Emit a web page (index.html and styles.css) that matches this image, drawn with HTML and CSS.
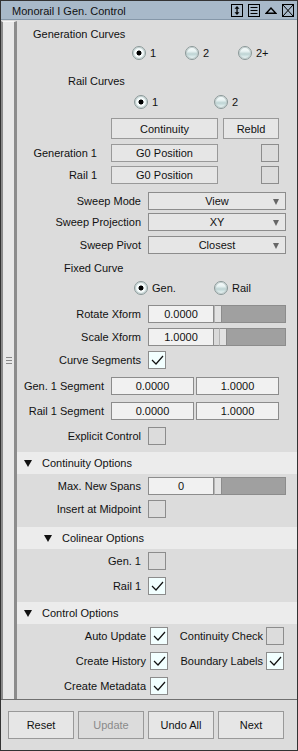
FILE: index.html
```html
<!DOCTYPE html>
<html lang="en">
<head>
    <meta charset="UTF-8" />
    <title>Monorail I Gen. Control</title>
    <link rel="stylesheet" href="styles.css">
</head>
<body>

<div class="win">
    <div class="titlebar">
        <span class="title">Monorail I Gen. Control</span>
        <div class="tools">
            <svg width="12" height="13" viewBox="0 0 12 13"><rect x="0.5" y="0.5" width="11" height="12" fill="none" stroke="#000"/><path d="M6 2 L8.5 4.8 H3.5Z M6 11 L8.5 8.2 H3.5Z" fill="#000"/><rect x="5.4" y="4" width="1.3" height="5" fill="#000"/></svg>
            <svg width="12" height="13" viewBox="0 0 12 13"><rect x="0.5" y="0.5" width="11" height="12" fill="none" stroke="#000"/><path d="M2.5 3.5 H9.5 M2.5 6.5 H9.5 M2.5 9.5 H9.5" stroke="#000"/></svg>
            <svg width="12" height="13" viewBox="0 0 12 13"><path d="M1.2 9.3 L6 4 L10.8 9.3 Z" fill="none" stroke="#000" stroke-width="1.4"/></svg>
            <svg width="12" height="13" viewBox="0 0 12 13"><rect x="0.5" y="0.5" width="11" height="12" fill="none" stroke="#000"/><path d="M1 1 L11 12 M11 1 L1 12" stroke="#000"/></svg>
        </div>
    </div>

    <div class="main">
        <div class="grip">
            <svg width="6" height="7" viewBox="0 0 6 7"><path d="M0 0.5 H6 M0 3.5 H6 M0 6.5 H6" stroke="#888"/></svg>
        </div>

        <div class="content">
            <p class="cap mt7 cap-gen">Generation Curves</p>
            <div class="radios mt5 radios-3">
                <label class="radio on"><i></i>1</label>
                <label class="radio"><i></i>2</label>
                <label class="radio"><i></i>2+</label>
            </div>

            <p class="cap mt14 cap-rail">Rail Curves</p>
            <div class="radios mt7 radios-2">
                <label class="radio on"><i></i>1</label>
                <label class="radio"><i></i>2</label>
            </div>

            <div class="row row-btns mt9">
                <button class="btn btn-wide">Continuity</button>
                <button class="btn btn-small">Rebld</button>
            </div>
            <div class="row mt5">
                <span class="lbl lbl-short">Generation 1</span>
                <button class="btn btn-wide">G0 Position</button>
                <span class="cb cb-far"></span>
            </div>
            <div class="row mt4">
                <span class="lbl lbl-short">Rail 1</span>
                <button class="btn btn-wide">G0 Position</button>
                <span class="cb cb-far"></span>
            </div>

            <div class="row mt8">
                <span class="lbl">Sweep Mode</span>
                <div class="drop">View</div>
            </div>
            <div class="row mt3">
                <span class="lbl">Sweep Projection</span>
                <div class="drop">XY</div>
            </div>
            <div class="row mt5">
                <span class="lbl">Sweep Pivot</span>
                <div class="drop">Closest</div>
            </div>

            <p class="cap mt7 cap-fixed">Fixed Curve</p>
            <div class="radios mt6 radios-2">
                <label class="radio on"><i></i>Gen.</label>
                <label class="radio"><i></i>Rail</label>
            </div>

            <div class="row mt10">
                <span class="lbl">Rotate Xform</span>
                <div class="slider">
                    <span class="fld">0.0000</span>
                    <span class="thumb"></span>
                    <span class="track"></span>
                </div>
            </div>
            <div class="row mt5">
                <span class="lbl">Scale Xform</span>
                <div class="slider">
                    <span class="fld">1.0000</span>
                    <span class="gap"></span>
                    <span class="thumb"></span>
                    <span class="track"></span>
                </div>
            </div>
            <div class="row mt5">
                <span class="lbl">Curve Segments</span>
                <span class="cb on"><svg width="16" height="16" viewBox="0 0 16 16"><path d="M3 8 L7 12 L14 4" fill="none" stroke="#111" stroke-width="1.2"/></svg></span>
            </div>
            <div class="row mt8">
                <span class="lbl lbl-seg">Gen. 1 Segment</span>
                <span class="fld fld-seg">0.0000</span>
                <span class="fld fld-seg">1.0000</span>
            </div>
            <div class="row mt7">
                <span class="lbl lbl-seg">Rail 1 Segment</span>
                <span class="fld fld-seg">0.0000</span>
                <span class="fld fld-seg">1.0000</span>
            </div>
            <div class="row mt7">
                <span class="lbl">Explicit Control</span>
                <span class="cb"></span>
            </div>

            <div class="section mt7">
                <svg class="arrow" width="8" height="7" viewBox="0 0 8 7"><path d="M0 0 H8 L4 7Z" fill="#111"/></svg>
                Continuity Options
            </div>
            <div class="row mt3">
                <span class="lbl">Max. New Spans</span>
                <div class="slider">
                    <span class="fld">0</span>
                    <span class="thumb"></span>
                    <span class="track"></span>
                </div>
            </div>
            <div class="row mt5">
                <span class="lbl">Insert at Midpoint</span>
                <span class="cb"></span>
            </div>

            <div class="section section-sub mt9">
                <svg class="arrow" width="8" height="7" viewBox="0 0 8 7"><path d="M0 0 H8 L4 7Z" fill="#111"/></svg>
                Colinear Options
            </div>
            <div class="row mt3">
                <span class="lbl">Gen. 1</span>
                <span class="cb"></span>
            </div>
            <div class="row mt7">
                <span class="lbl">Rail 1</span>
                <span class="cb on"><svg width="16" height="16" viewBox="0 0 16 16"><path d="M3 8 L7 12 L14 4" fill="none" stroke="#111" stroke-width="1.2"/></svg></span>
            </div>

            <div class="section mt7">
                <svg class="arrow" width="8" height="7" viewBox="0 0 8 7"><path d="M0 0 H8 L4 7Z" fill="#111"/></svg>
                Control Options
            </div>
            <div class="row mt3">
                <span class="lbl lbl-ctl">Auto Update</span>
                <span class="cb on"><svg width="16" height="16" viewBox="0 0 16 16"><path d="M3 8 L7 12 L14 4" fill="none" stroke="#111" stroke-width="1.2"/></svg></span>
                <span class="lbl lbl-ctl2">Continuity Check</span>
                <span class="cb"></span>
            </div>
            <div class="row mt7">
                <span class="lbl lbl-ctl">Create History</span>
                <span class="cb on"><svg width="16" height="16" viewBox="0 0 16 16"><path d="M3 8 L7 12 L14 4" fill="none" stroke="#111" stroke-width="1.2"/></svg></span>
                <span class="lbl lbl-ctl2">Boundary Labels</span>
                <span class="cb on"><svg width="16" height="16" viewBox="0 0 16 16"><path d="M3 8 L7 12 L14 4" fill="none" stroke="#111" stroke-width="1.2"/></svg></span>
            </div>
            <div class="row mt7">
                <span class="lbl lbl-ctl">Create Metadata</span>
                <span class="cb on"><svg width="16" height="16" viewBox="0 0 16 16"><path d="M3 8 L7 12 L14 4" fill="none" stroke="#111" stroke-width="1.2"/></svg></span>
            </div>
        </div>
    </div>

    <div class="footer">
        <button class="btn btn-foot">Reset</button>
        <button class="btn btn-foot" disabled>Update</button>
        <button class="btn btn-foot">Undo All</button>
        <button class="btn btn-foot">Next</button>
    </div>
</div>

</body>
</html>
```

FILE: styles.css
```css
* {
    box-sizing: border-box;
}
body {
    margin: 0;
    font-family: "Liberation Sans", Arial, sans-serif;
    font-size: 11px;
    color: #111;
}
.win {
    width: 298px;
    height: 751px;
    border: 1px solid #333;
    background: #dcdcdc;
    display: flex;
    flex-direction: column;
}
.titlebar {
    height: 19px;
    flex: none;
    background: #a8b9c9;
    border-bottom: 1px solid #8597a8;
    display: flex;
    align-items: center;
    padding-left: 11px;
    padding-right: 3px;
}
.title {
    font-size: 11px;
    padding-top: 1px;
}
.tools {
    margin-left: auto;
    display: flex;
    gap: 5px;
}
.tools svg {
    display: block;
}
.main {
    height: 679px;
    flex: none;
    display: flex;
}
.grip {
    width: 16px;
    flex: none;
    background: #e8e8e8;
    border-left: 2px solid #8c8c8c;
    border-right: 3px solid #8c8c8c;
    border-top: 1px solid #f6f6f6;
    margin-top: 1px;
    display: flex;
    align-items: center;
    justify-content: center;
}
.content {
    flex: 1;
}

/* spacing */
.mt3 { margin-top: 3px; }
.mt4 { margin-top: 4px; }
.mt5 { margin-top: 5px; }
.mt6 { margin-top: 6px; }
.mt7 { margin-top: 7px; }
.mt8 { margin-top: 8px; }
.mt9 { margin-top: 9px; }
.mt10 { margin-top: 10px; }
.mt14 { margin-top: 14px; }

.cap {
    margin-bottom: 0;
    height: 14px;
    line-height: 14px;
}
.cap-gen { padding-left: 16px; }
.cap-rail { padding-left: 51px; }
.cap-fixed { padding-left: 47px; }

.radios {
    display: flex;
    height: 14px;
}
.radios-3 { padding-left: 115px; }
.radios-3 .radio { width: 53px; }
.radios-2 { padding-left: 117px; }
.radios-2 .radio { width: 80px; }
.radio {
    display: flex;
    align-items: center;
    line-height: 14px;
}
.radio i {
    width: 14px;
    height: 14px;
    border-radius: 50%;
    border: 1px solid #8a9898;
    box-shadow: inset 0 0 0 1px #c4d0d0;
    background: linear-gradient(#f6fbfb 0%, #e9f3f3 35%, #bdd3d3 58%, #d9e9e9 80%, #eef6f6 100%);
    margin-right: 4px;
    flex: none;
}
.radio.on i {
    background: radial-gradient(circle, #000 0 2.2px, #fbffff 2.8px, #eef6f6 4.5px, #cfe0e0 100%);
}

.row {
    display: flex;
    align-items: center;
    height: 18px;
}
.row-btns {
    height: 21px;
    padding-left: 94px;
    gap: 5px;
}
.lbl {
    width: 124px;
    margin-right: 7px;
    text-align: right;
    flex: none;
    white-space: nowrap;
}
.lbl-short {
    width: 80px;
    margin-right: 14px;
}
.lbl-seg {
    width: 87px;
}
.lbl-ctl {
    width: 129px;
    margin-right: 4px;
}
.lbl-ctl2 {
    width: 95px;
    margin-right: 3px;
}

.btn {
    font-family: "Liberation Sans", Arial, sans-serif;
    font-size: 11px;
    color: #111;
    background: #e6e6e6;
    border: 1px solid #999;
    padding: 0;
    height: 100%;
    flex: none;
}
.btn-wide { width: 107px; }
.btn-small { width: 56px; }
.btn:disabled {
    color: #8a8a8a;
    background: #dcdcdc;
}

.cb {
    width: 18px;
    height: 18px;
    border: 1px solid #8c8c8c;
    flex: none;
    display: flex;
    align-items: center;
    justify-content: center;
}
.cb.on {
    background: #f2ffff;
}
.cb svg {
    display: block;
}
.cb-far {
    margin-left: 43px;
}

.drop {
    width: 138px;
    height: 18px;
    border: 1px solid #8c8c8c;
    background: #e6e6e6;
    display: flex;
    align-items: center;
    justify-content: center;
    position: relative;
}
.drop::after {
    content: "";
    position: absolute;
    right: 6px;
    top: 6px;
    border-left: 3px solid transparent;
    border-right: 3px solid transparent;
    border-top: 6px solid #666;
}

.fld {
    height: 18px;
    background: #f1f1f1;
    border: 1px solid #8c8c8c;
    display: flex;
    align-items: center;
    justify-content: center;
    flex: none;
}
.fld-seg {
    width: 83px;
    margin-right: 2px;
}
.slider {
    width: 138px;
    height: 18px;
    display: flex;
}
.slider .fld {
    width: 66px;
}
.thumb {
    width: 8px;
    background: #e2e2e2;
    border: 1px solid #8c8c8c;
    border-left-color: #b5b5b5;
}
.gap {
    width: 5px;
    background: #dadada;
    border-top: 1px solid #8c8c8c;
    border-bottom: 1px solid #8c8c8c;
}
.track {
    flex: 1;
    background: #a0a0a0;
    border: 1px solid #8c8c8c;
    border-left: none;
}

.section {
    height: 22px;
    background: #ececec;
    display: flex;
    align-items: center;
    padding-left: 7px;
}
.section-sub {
    padding-left: 27px;
}
.arrow {
    margin-right: 10px;
    flex: none;
}

.footer {
    flex: 1;
    border-top: 1px solid #707070;
    padding: 11px 0 0 7px;
    display: flex;
    gap: 4px;
    align-items: flex-start;
}
.btn-foot {
    width: 66px;
    height: 28px;
}
```
